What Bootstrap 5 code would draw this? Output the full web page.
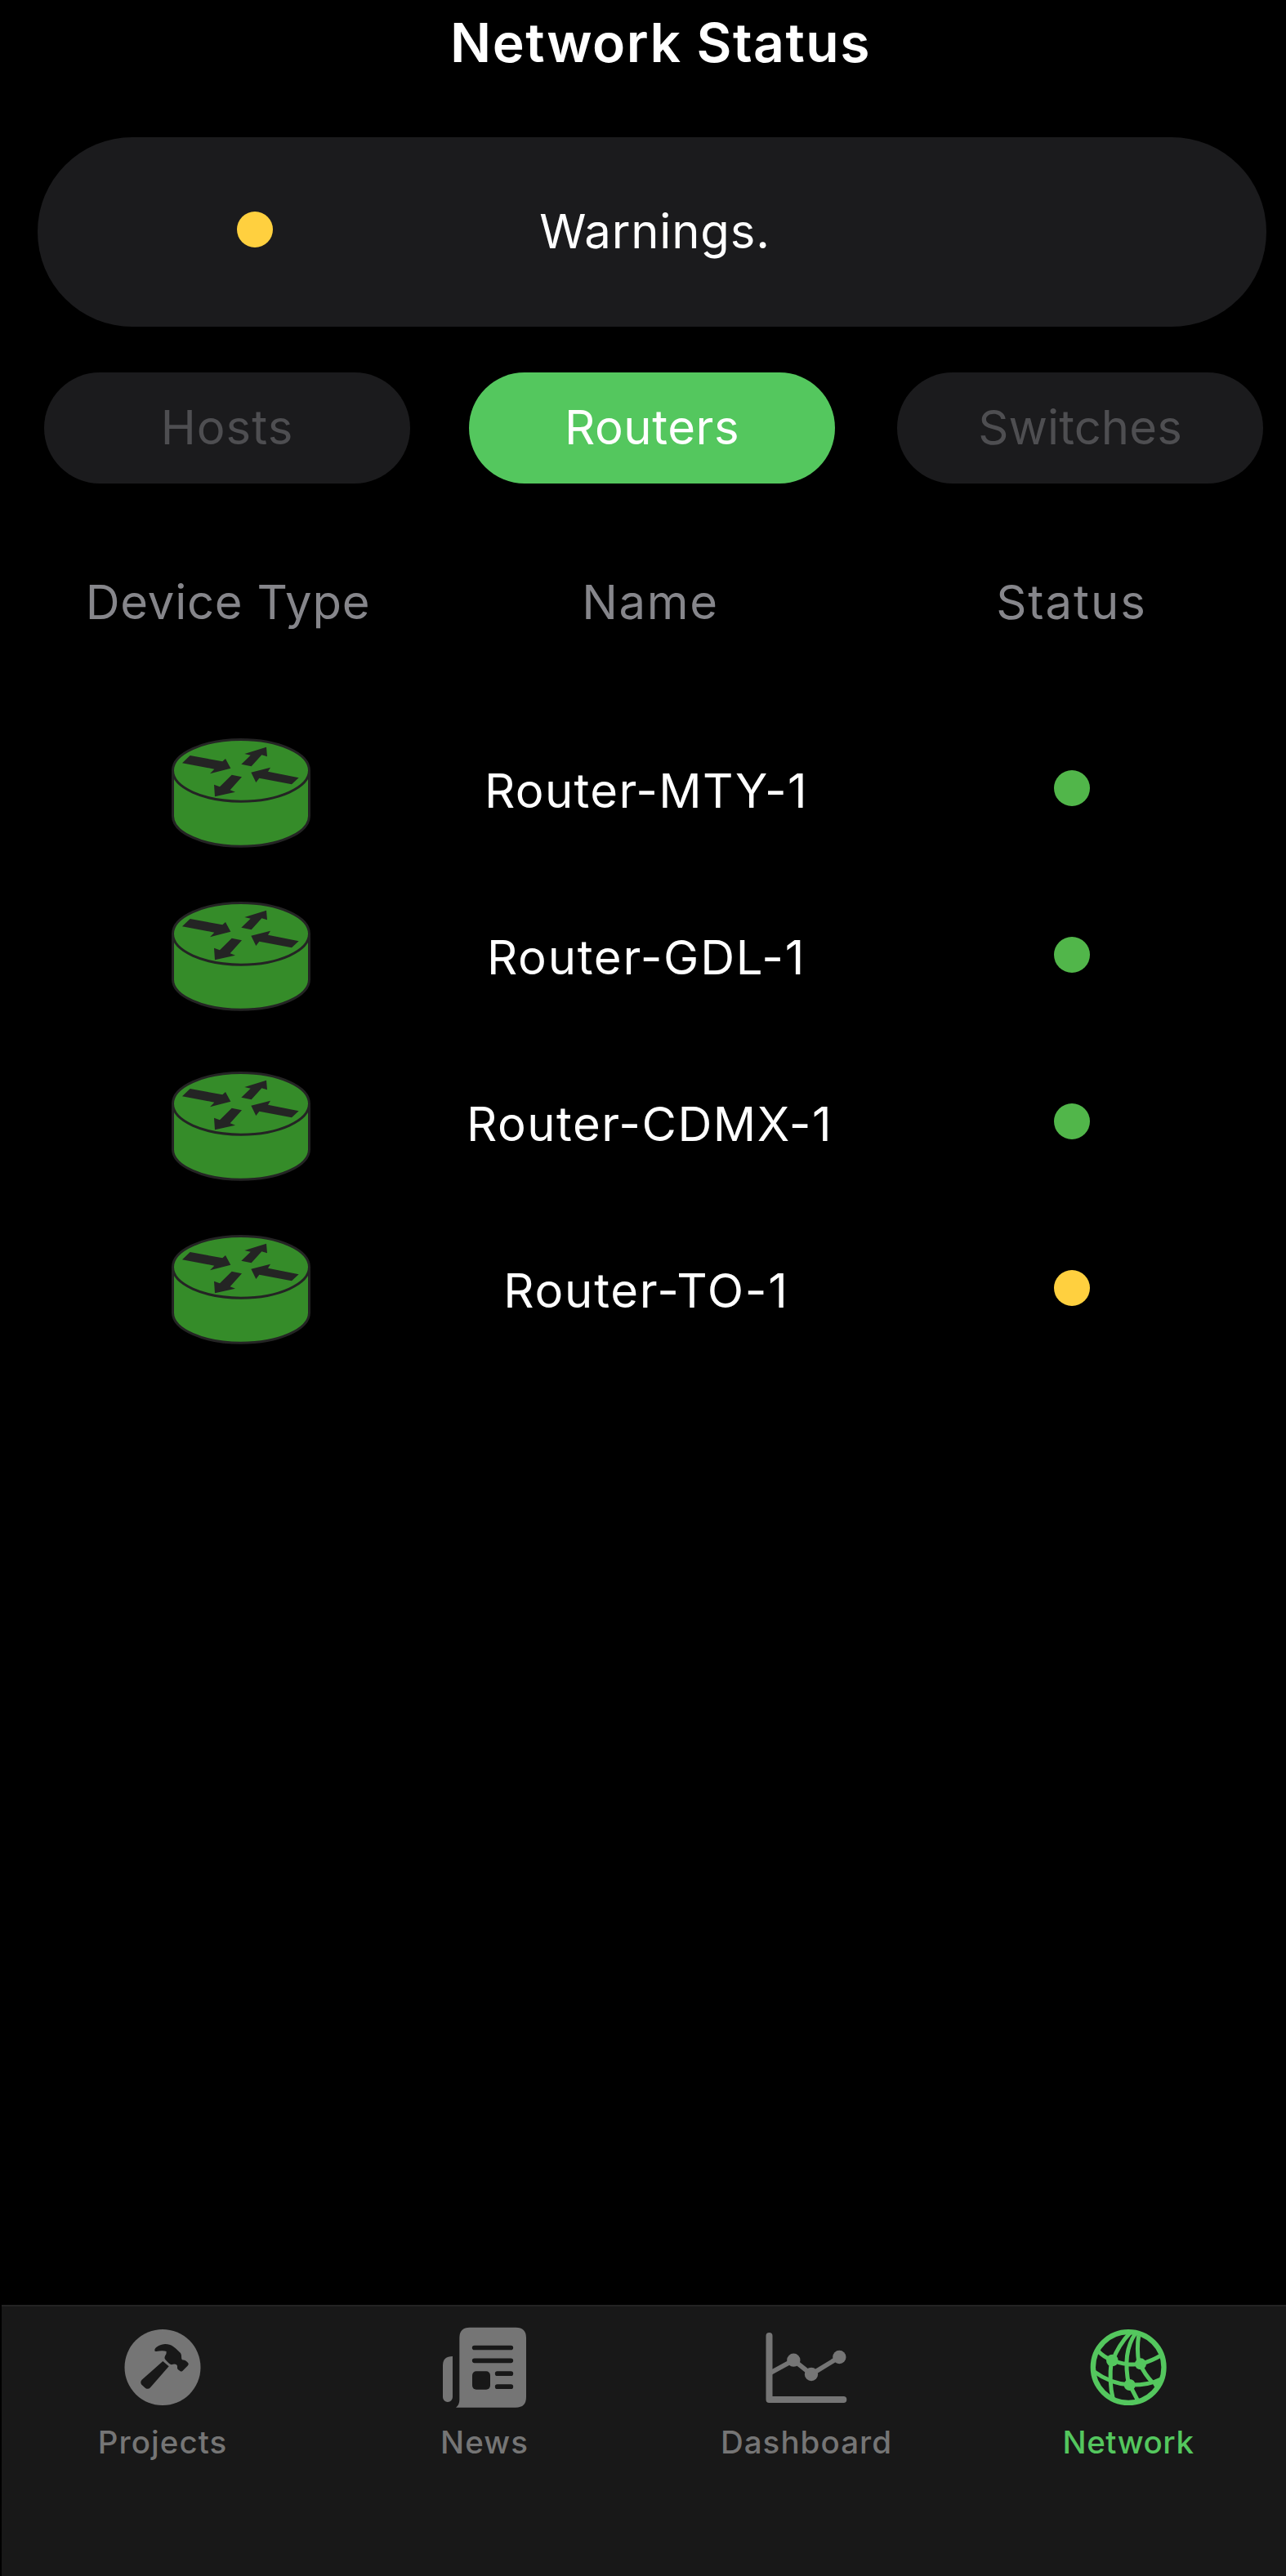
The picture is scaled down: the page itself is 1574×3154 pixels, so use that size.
<!DOCTYPE html>
<html lang="en">
<head>
<meta charset="utf-8">
<meta name="viewport" content="width=device-width, initial-scale=1">
<title>Network Status</title>
<link href="https://cdn.jsdelivr.net/npm/bootstrap@5.3.0/dist/css/bootstrap.min.css" rel="stylesheet">
<style>
  body{background:#000;color:#fff;font-family:Inter,"Liberation Sans",sans-serif;font-size:58px;line-height:1;height:3154px;overflow:hidden;white-space:nowrap}
  .screen-title{height:104px;padding-left:43px;font-size:66px;font-weight:600;letter-spacing:1.48px;line-height:1}
  .status-card{margin:64px 24px 0 46px;height:232px;background:#1b1b1d}
  .card-side{width:501px;padding-left:244px}
  .card-text{width:509px;letter-spacing:.84px;padding-bottom:2px}
  .dot{display:block;width:44px;height:44px;border-radius:50%;margin-bottom:7px}
  .dot-warn{background:#ffd03f}
  .dot-ok{background:#51b64a}
  .segments{margin:56px 28px 0 54px}
  .btn-seg{width:448px;height:136px;padding:0 0 2px;font-size:58px;line-height:1;border:0;background:#1b1b1d;color:#4e4e51}
  .btn-seg.active{background:#54c75e!important;color:#fff!important;margin-right:4px}
  .ls-hosts{letter-spacing:1.02px}
  .ls-routers{letter-spacing:.57px}
  .ls-switches{letter-spacing:.09px}
  .device-head{margin-top:72px;height:146px;margin-bottom:56px;color:#86868b}
  .device-row{height:204px}
  .col-type{width:558px}
  .col-name{width:476px}
  .col-state{width:540px;padding-left:15px}
  .device-head .col-type{letter-spacing:.76px}
  .device-head .col-name{letter-spacing:1.64px}
  .device-head .col-state{letter-spacing:1.94px}
  .device-row .col-type{padding-left:32px}
  .device-row .col-name{padding-right:10px;letter-spacing:1.75px}
  .device-row .name-mty{letter-spacing:1.33px}
  .device-row .name-cdmx{letter-spacing:1.51px;padding-right:2px}
  .device-row .col-state{padding-left:16px}
  .router-icon{width:170px;height:134px;margin-top:6px}
  .device-row:nth-child(even) .router-icon{margin-top:0;margin-bottom:2px}
  .tabbar{margin-left:2px;height:332px;background:#181818;border-top:2px solid #232323}
  .tab-item{flex:0 0 394px;padding:20px 0 0;color:#757575;font-size:38.5px;font-weight:500;line-height:1;text-decoration:none;letter-spacing:1.05px}
  .tab-item svg{width:120px;height:110px;margin-bottom:17px}
  .tab-item.active{color:#54c75e;letter-spacing:.58px}
</style>
</head>
<body class="d-flex flex-column">

<svg class="d-none" xmlns="http://www.w3.org/2000/svg">
  <symbol id="router" viewBox="60 72 510 402">
    <path d="M64.500 190V358A250.500 111 0 0 0 565.500 358V190A250.500 113.500 0 0 0 64.500 190Z" fill="#358c29" stroke="#242424" stroke-width="9"/>
    <path d="M64.500 190A250.500 113.500 0 0 0 565.500 190" fill="none" stroke="#242424" stroke-width="9"/>
    <path fill="#242424" d="M128 135L247 157L258 147L277 182L201 202L217 185L99 163ZM328 129L408 104L411 139L391 133L353 175L316 167L350 134ZM352 197L423 179L414 194L527 217L501 241L382 218L370 234ZM281 206L318 214L275 262L294 269L219 286L216 242L237 250Z"/>
  </symbol>
</svg>

<header class="screen-title d-flex align-items-center justify-content-center">Network Status</header>

<section class="status-card rounded-pill d-flex align-items-center">
  <div class="card-side"><span class="dot dot-warn"></span></div>
  <div class="card-text text-center">Warnings.</div>
</section>

<div class="segments d-flex justify-content-between">
  <button type="button" class="btn btn-seg rounded-pill ls-hosts">Hosts</button>
  <button type="button" class="btn btn-seg rounded-pill active ls-routers">Routers</button>
  <button type="button" class="btn btn-seg rounded-pill ls-switches">Switches</button>
</div>

<main class="flex-grow-1">
  <div class="device-head d-flex align-items-center text-center">
    <div class="col-type">Device Type</div>
    <div class="col-name">Name</div>
    <div class="col-state">Status</div>
  </div>
  <div>
    <div class="device-row d-flex align-items-center text-center">
      <div class="col-type d-flex justify-content-center"><svg class="router-icon"><use href="#router"/></svg></div>
      <div class="col-name name-mty">Router-MTY-1</div>
      <div class="col-state d-flex justify-content-center"><span class="dot dot-ok"></span></div>
    </div>
    <div class="device-row d-flex align-items-center text-center">
      <div class="col-type d-flex justify-content-center"><svg class="router-icon"><use href="#router"/></svg></div>
      <div class="col-name">Router-GDL-1</div>
      <div class="col-state d-flex justify-content-center"><span class="dot dot-ok"></span></div>
    </div>
    <div class="device-row d-flex align-items-center text-center">
      <div class="col-type d-flex justify-content-center"><svg class="router-icon"><use href="#router"/></svg></div>
      <div class="col-name name-cdmx">Router-CDMX-1</div>
      <div class="col-state d-flex justify-content-center"><span class="dot dot-ok"></span></div>
    </div>
    <div class="device-row d-flex align-items-center text-center">
      <div class="col-type d-flex justify-content-center"><svg class="router-icon"><use href="#router"/></svg></div>
      <div class="col-name">Router-TO-1</div>
      <div class="col-state d-flex justify-content-center"><span class="dot dot-warn"></span></div>
    </div>
  </div>
</main>

<nav class="tabbar d-flex flex-shrink-0">
  <a href="#" class="tab-item d-flex flex-column align-items-center">
    <svg viewBox="117 132 360 330">
      <circle cx="297" cy="295.500" r="139.500" fill="currentColor"/>
      <g fill="#181818">
        <path d="M298 273L320 292L252 370Q244 378 234 372L220 359Q213 350 221 341Z"/>
        <path d="M268 234C266 222 290 210 307 210C330 210 340 221 362 242C369 250 364 261 369 268L377 269Q382 269 391 280Q394 284 390 289L370 309Q366 312 362 310L353 303C349 297 354 290 347 285Q340 282 330 286Q322 284 307 267Q302 261 307 252Q312 246 311 237Q298 232 274 237Q268 238 268 234Z"/>
      </g>
    </svg>
    Projects
  </a>
  <a href="#" class="tab-item d-flex flex-column align-items-center">
    <svg viewBox="99 132 360 330">
      <path fill="currentColor" d="M187 187Q187 149 225 149H394Q432 149 432 187V405Q432 443 394 443H174Q187 434 187 415ZM162 255V405A18 18 0 0 1 126 405V288Q126 255 162 255Z"/>
      <path d="M242 223.500H376M242 271H376M326 318.500H376M326 366.500H376" stroke="#181818" stroke-width="17" stroke-linecap="round"/>
      <rect x="234" y="310" width="66" height="67" rx="15" fill="#181818"/>
    </svg>
    News
  </a>
  <a href="#" class="tab-item d-flex flex-column align-items-center">
    <svg viewBox="171 132 360 330" fill="none" stroke="currentColor" stroke-linecap="round" stroke-linejoin="round">
      <path d="M214.500 180V414H487" stroke-width="24"/>
      <path d="M219 316L304 269L369 321L472 258" stroke-width="17"/>
      <g fill="currentColor" stroke="none"><circle cx="304" cy="269" r="24.500"/><circle cx="369" cy="321" r="24.500"/><circle cx="472" cy="258" r="24.500"/></g>
    </svg>
    Dashboard
  </a>
  <a href="#" class="tab-item active d-flex flex-column align-items-center">
    <svg viewBox="123 132 360 330" fill="none" stroke="currentColor" stroke-width="15">
      <circle cx="303.500" cy="295.500" r="130" stroke-width="19"/>
      <path d="M310 168Q266 215 246 270M241 270Q231 350 247 412M330 170Q280 240 305 360M341 180Q333 225 342 283M190 234Q215 260 245 270Q300 291 348 283Q390 272 425 250M175 310Q240 357 308 360Q380 361 425 338M346 283Q362 320 392 352M308 360L337 416"/>
      <path d="M386 345L414 350L402 372Z" fill="currentColor" stroke="none"/>
      <g fill="currentColor" stroke="none"><circle cx="244" cy="270" r="22"/><circle cx="348" cy="283" r="21"/><circle cx="308" cy="360" r="21"/></g>
    </svg>
    Network
  </a>
</nav>

<script src="https://cdn.jsdelivr.net/npm/bootstrap@5.3.0/dist/js/bootstrap.bundle.min.js"></script>
</body>
</html>
